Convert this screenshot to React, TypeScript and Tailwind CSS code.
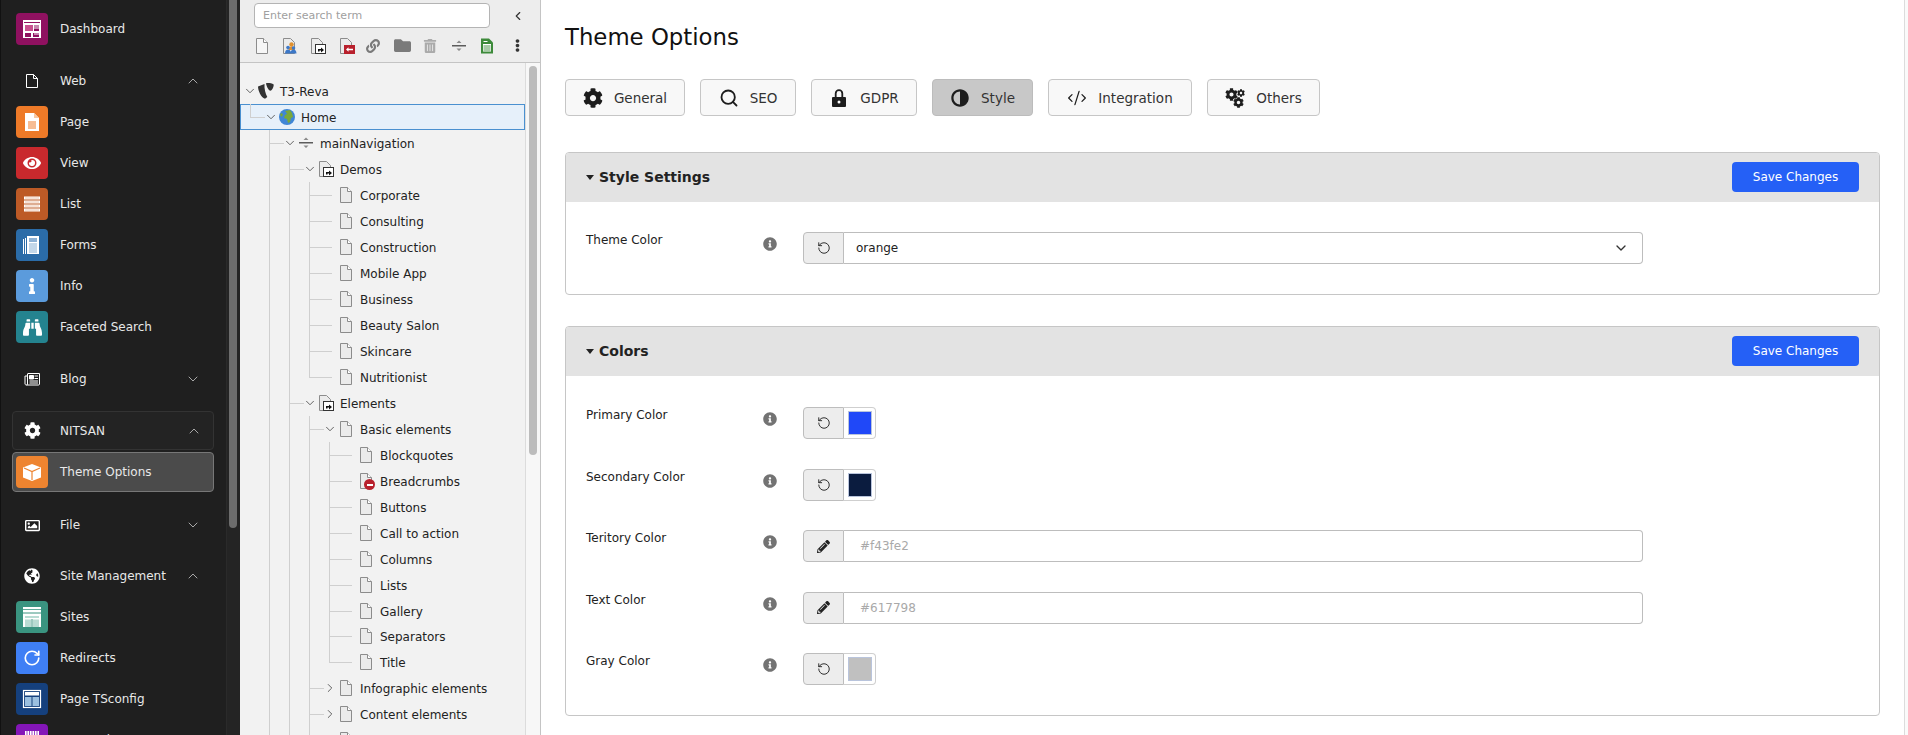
import type { ReactNode } from 'react';
import { ChevronDown, ChevronRight, ChevronUp, ChevronLeft, CodeXml, RotateCcw, RotateCw, Search } from 'lucide-react';
import {
  FaAdjust,
  FaBinoculars,
  FaCog,
  FaEllipsisV,
  FaEye,
  FaFolder,
  FaGlobeAmericas,
  FaInfo,
  FaInfoCircle,
  FaLink,
  FaPencilAlt,
  FaRegImage,
  FaTrashAlt,
} from 'react-icons/fa';

const PageGlyph = () => (
  <svg viewBox="0 0 32 32" className="size-8">
    <path d="M9 7h9l5 5v13H9z" fill="#fff" />
    <path d="M18 7v5h5z" fill="#f7c9a4" />
    <path d="M12 16h8M12 18h8M12 20h8M12 22h8" stroke="#ee7a28" strokeWidth="1" />
  </svg>
);

const DashboardGlyph = () => (
  <svg viewBox="0 0 32 32" className="size-8">
    <rect x="7" y="7" width="18" height="18" fill="#fff" />
    <rect x="8" y="9" width="16" height="1" fill="#8f1160" />
    <path d="M9 12h8v6H9z" fill="#c9518f" />
    <path d="M18 12h5v6h-5zM9 20h6v4H9zM17 20h6v4h-6z" fill="#8f1160" />
    <path d="M18 13h5M18 15h5M18 21h5" stroke="#fff" strokeWidth="1" />
  </svg>
);

const ListGlyph = () => (
  <svg viewBox="0 0 32 32" className="size-8">
    <g fill="#fff">
      <rect x="8" y="8.500" width="16" height="3" />
      <rect x="8" y="12.500" width="16" height="3" />
      <rect x="8" y="16.500" width="16" height="3" />
      <rect x="8" y="20.500" width="16" height="3" />
    </g>
    <path d="M9 10h14M9 14h14M9 18h14M9 22h14" stroke="#e8b89c" strokeWidth="0.800" />
  </svg>
);

const FormsGlyph = () => (
  <svg viewBox="0 0 32 32" className="size-8">
    <path d="M7 10h1v15H7zM9 9h1v16H9z" fill="#fff" />
    <rect x="11" y="7" width="12" height="18" fill="#fff" />
    <rect x="13" y="9" width="8" height="4" fill="#8fb3d6" />
    <path d="M13 15h8M13 17h8M13 19h8M13 21h8M13 23h8" stroke="#6b9cc8" strokeWidth="0.800" />
  </svg>
);

const CubeGlyph = () => (
  <svg viewBox="0 0 32 32" className="size-8">
    <path d="M16 8l9 3.500v10L16 25l-9-3.500v-10z" fill="#fff" />
    <path d="M8 12l8 3.500 8-3.500M16 15.500V24" stroke="#ee8430" strokeWidth="1.200" fill="none" />
  </svg>
);

const SitesGlyph = () => (
  <svg viewBox="0 0 32 32" className="size-8">
    <rect x="7" y="6" width="18" height="20" fill="#fff" />
    <path d="M7 8.500h18" stroke="#3a9480" strokeWidth="0.800" />
    <path d="M7 12h18" stroke="#3a9480" strokeWidth="1" />
    <path d="M9 15h14v2H9zM9 18.500h6V26H9zM17 18.500h6V26h-6z" fill="#b9dcd3" />
    <path d="M16 18v8" stroke="#3a9480" strokeWidth="1" />
  </svg>
);

const TsConfigGlyph = () => (
  <svg viewBox="0 0 32 32" className="size-8">
    <rect x="7.500" y="7.500" width="17" height="17" fill="none" stroke="#fff" strokeWidth="1.200" />
    <rect x="9" y="9" width="14" height="3.500" fill="#fff" />
    <rect x="9" y="14" width="6.500" height="9" fill="#9cc0e0" />
    <rect x="16.500" y="14" width="6.500" height="9" fill="#9cc0e0" />
  </svg>
);

const TypoScriptGlyph = () => (
  <svg viewBox="0 0 32 32" className="size-8">
    <rect x="9" y="7" width="14" height="18" fill="#fff" />
    <path d="M11 7v18M13.500 7v18M16 7v18M18.500 7v18M21 7v18" stroke="#8416b8" strokeWidth="0.800" />
  </svg>
);

const BlogGlyph = () => (
  <svg viewBox="0 0 16 16" className="size-4 fill-none stroke-white">
    <path d="M3.500 3v10c0 .8-.5 1-1 1s-1.500-.3-1.500-1V5h2.500" />
    <path d="M3.500 2.500h12v10.500c0 .6-.4 1-1 1h-12" />
    <path d="M5.500 4.500h4v3.500h-4z" fill="#fff" />
    <path d="M10.500 5h3.500M10.500 7.500h3.500M5.500 10h8.500M5.500 12h8.500" />
  </svg>
);

function NavTile({ bg, children }: { bg: string; children: ReactNode }) {
  return <span className={`flex size-8 shrink-0 items-center justify-center rounded-sm text-white ${bg}`}>{children}</span>;
}

function NavItem({ tile, label }: { tile: ReactNode; label: string }) {
  return (
    <div className="flex h-[41px] items-start pl-[15px] pt-1">
      {tile}
      <span className="ml-3 text-[12px] leading-8 text-[#e8e8e8]">{label}</span>
    </div>
  );
}

function NavGroup({ icon, label, open }: { icon: ReactNode; label: string; open?: boolean }) {
  return (
    <div className="flex h-[41px] items-center pb-px pl-[15px] pr-[25px]">
      <span className="flex size-8 shrink-0 items-center justify-center text-white">{icon}</span>
      <span className="ml-3 text-[12px] text-[#e8e8e8]">{label}</span>
      <span className="ml-auto text-[#a8a8a8]">{open ? <ChevronUp size={16} strokeWidth={1.5} /> : <ChevronDown size={16} strokeWidth={1.5} />}</span>
    </div>
  );
}

function Sidebar() {
  return (
    <aside className="flex h-full w-[240px] shrink-0 bg-[#1f1f1f]">
      <nav className="h-full w-[226px] overflow-hidden border-l border-[#111] pt-[9px]">
        <NavItem label="Dashboard" tile={<NavTile bg="bg-[#8f1160]"><DashboardGlyph /></NavTile>} />
        <div className="mt-[11px]">
          <NavGroup
            open
            label="Web"
            icon={
              <svg viewBox="0 0 16 16" className="size-4 fill-none stroke-white">
                <path d="M2.500 1.500h7l4 4v9h-11z" />
                <path d="M9.500 1.500v4h4" />
              </svg>
            }
          />
        </div>
        <NavItem label="Page" tile={<NavTile bg="bg-[#ee7a28]"><PageGlyph /></NavTile>} />
        <NavItem label="View" tile={<NavTile bg="bg-[#c9292d]"><FaEye size={18} /></NavTile>} />
        <NavItem label="List" tile={<NavTile bg="bg-[#bd5a26]"><ListGlyph /></NavTile>} />
        <NavItem label="Forms" tile={<NavTile bg="bg-[#2b6ca8]"><FormsGlyph /></NavTile>} />
        <NavItem label="Info" tile={<NavTile bg="bg-[#5b9bdc]"><FaInfo size={16} /></NavTile>} />
        <NavItem label="Faceted Search" tile={<NavTile bg="bg-[#24838f]"><FaBinoculars size={19} /></NavTile>} />
        <div className="mt-[11px]">
          <NavGroup label="Blog" icon={<BlogGlyph />} />
        </div>
        <div className="ml-[11px] mr-3 mt-[11px] flex h-[39px] items-center rounded-sm border border-[#333] bg-[#232323] pl-[3px] pr-[11px]">
          <span className="flex size-8 items-center justify-center text-white"><FaCog size={17} /></span>
          <span className="ml-3 text-[12px] text-[#e8e8e8]">NITSAN</span>
          <span className="ml-auto text-[#a8a8a8]"><ChevronUp size={16} strokeWidth={1.5} /></span>
        </div>
        <div className="ml-[11px] mr-3 mt-[2px] flex h-[40px] items-center rounded-sm border border-[#777] bg-[#4b4b4b] pl-[3px]">
          <NavTile bg="bg-[#ee8430]"><CubeGlyph /></NavTile>
          <span className="ml-3 text-[12px] text-[#e8e8e8]">Theme Options</span>
        </div>
        <div className="mt-[13px]">
          <NavGroup label="File" icon={<FaRegImage size={15} />} />
        </div>
        <div className="mt-[10px]">
          <NavGroup open label="Site Management" icon={<FaGlobeAmericas size={16} />} />
        </div>
        <NavItem label="Sites" tile={<NavTile bg="bg-[#3a9480]"><SitesGlyph /></NavTile>} />
        <NavItem label="Redirects" tile={<NavTile bg="bg-[#3f7ff5]"><RotateCw size={18} strokeWidth={2.2} /></NavTile>} />
        <NavItem label="Page TSconfig" tile={<NavTile bg="bg-[#15407d]"><TsConfigGlyph /></NavTile>} />
        <NavItem label="TypoScript" tile={<NavTile bg="bg-[#8416b8]"><TypoScriptGlyph /></NavTile>} />
      </nav>
      <div className="h-full w-[14px] border-l border-[#2a2a2a] bg-[#242424] pl-[2px]">
        <div className="h-[528px] w-2 rounded-b-full bg-[#6c6c6c]" />
      </div>
    </aside>
  );
}

const DocIcon = () => (
  <svg viewBox="0 0 16 16" className="size-4">
    <path d="M2.500 .5h7l4 4v11h-11z" fill="#ebebeb" stroke="#8c8c8c" />
    <path d="M9.500 .5v4h4" fill="#fff" stroke="#8c8c8c" />
  </svg>
);

const DocBlankIcon = () => (
  <svg viewBox="0 0 16 16" className="size-4">
    <path d="M2.500 .5h7l4 4v11h-11z" fill="#f6f6f6" stroke="#8c8c8c" />
    <path d="M9.500 .5v4h4" fill="#fff" stroke="#8c8c8c" />
  </svg>
);

const ShortcutIcon = () => (
  <svg viewBox="0 0 16 16" className="size-4">
    <path d="M1.500 .5h7l4 4v11h-11z" fill="#ebebeb" stroke="#8c8c8c" />
    <rect x="5.500" y="6.500" width="10" height="9" fill="#fff" stroke="#333" />
    <path d="M8 13.500v-2.500h3V9.500l3 2.500-3 2.500V12.500H9.500v1z" fill="#111" />
  </svg>
);

const RedShortcutIcon = () => (
  <svg viewBox="0 0 16 16" className="size-4">
    <path d="M1.500 .5h7l4 4v11h-11z" fill="#ebebeb" stroke="#8c8c8c" />
    <rect x="5" y="7" width="11" height="9" fill="#b8202c" />
    <path d="M14 10.800H9.500v-1.500L7 11.500l2.500 2.200v-1.500H14z" fill="#fff" />
  </svg>
);

const UserPageIcon = () => (
  <svg viewBox="0 0 16 16" className="size-4">
    <path d="M1.500 .5h7l4 4v11h-11z" fill="#ebebeb" stroke="#8c8c8c" />
    <circle cx="9.500" cy="6.500" r="2.200" fill="#e0912f" />
    <path d="M6.500 12c0-2.500 1.500-3.500 3-3.500s3 1 3 3.500z" fill="#e0912f" />
    <circle cx="6" cy="9.500" r="1.800" fill="#3c78c8" />
    <circle cx="11.500" cy="10" r="1.800" fill="#3c78c8" />
    <path d="M3 15.500c0-2.500 1.300-4 3-4s3 1.500 3 4zM8.500 15.500c0-2.500 1.300-4 3-4s3 1.500 3 4z" fill="#3c78c8" />
  </svg>
);

const SeparatorIcon = () => (
  <svg viewBox="0 0 16 16" className="size-4 fill-[#5c5c5c]">
    <rect x="1" y="7" width="14" height="1.500" />
    <path d="M5.500 5L8 2.500 10.500 5zM5.500 10.500h5L8 13z" fill="#8a8a8a" />
  </svg>
);

const GreenDocIcon = () => (
  <svg viewBox="0 0 16 16" className="size-4">
    <path d="M2 .5h8l4 4v11H2z" fill="#3d8a3a" />
    <rect x="4" y="6" width="8" height="7.500" fill="#fff" />
    <path d="M4.500 8h7M4.500 10h7M4.500 12h7" stroke="#3d8a3a" strokeWidth="0.900" />
    <path d="M4.500 3.500h4" stroke="#fff" />
  </svg>
);

const Typo3Logo = () => (
  <svg viewBox="0 0 16 16" className="size-4 fill-[#333]">
    <path d="M0 3.500L6.500 1c-.4 4.500 1 9.500 2.800 13l-2.300 1.800C3 14.500 0 7.500 0 3.500z" />
    <path d="M8 .200c2.500-.4 5.500 0 7.700 1.200.2 2-1.500 6-3.300 6.300C10.500 7.500 8.300 3 8 .200z" />
  </svg>
);

const HomeGlobe = () => (
  <svg viewBox="0 0 16 16" className="size-4">
    <circle cx="8" cy="8" r="8" fill="#3f86d6" />
    <path d="M6 2l5-1 2 3 1 4-2 1-1 4-2 1-1-4-3-1 1-3 2-1-1-2z" fill="#79a83a" />
    <path d="M1 5l2-1 1 2-2 2z" fill="#79a83a" />
  </svg>
);

const LockIcon = () => (
  <svg viewBox="0 0 16 20" className="h-5 w-4">
    <path d="M4.700 9V5.500a3.300 3.300 0 0 1 6.600 0V9" fill="none" stroke="#1d1d1d" strokeWidth="1.800" />
    <path d="M2 9h12a1 1 0 0 1 1 1v8a1 1 0 0 1-1 1H2a1 1 0 0 1-1-1v-8a1 1 0 0 1 1-1z" fill="#1d1d1d" />
    <circle cx="8" cy="14" r="1.500" fill="#fff" />
  </svg>
);

const GearsIcon = () => (
  <span className="relative block h-5 w-5">
    <FaCog size={13} className="absolute left-0 top-0" />
    <FaCog size={8} className="absolute right-0 top-[1px]" />
    <FaCog size={11} className="absolute bottom-0 right-[1px]" />
  </span>
);

const BlockedDoc = () => (
  <span className="relative flex size-4 items-center justify-center">
    <DocIcon />
    <span className="absolute -bottom-[1px] -right-[1px] flex size-[11px] items-center justify-center rounded-full bg-[#b8202c]">
      <span className="h-[2px] w-[6px] bg-white" />
    </span>
  </span>
);

type TreeRow = {
  label: string;
  level: number;
  icon: ReactNode;
  toggle?: 'open' | 'closed';
  guides: number[];
  end?: boolean;
  active?: boolean;
};

const rows: TreeRow[] = [
  { label: 'T3-Reva', level: 0, icon: <Typo3Logo />, toggle: 'open', guides: [] },
  { label: 'Home', level: 1, icon: <HomeGlobe />, toggle: 'open', guides: [], end: true, active: true },
  { label: 'mainNavigation', level: 2, icon: <SeparatorIcon />, toggle: 'open', guides: [1] },
  { label: 'Demos', level: 3, icon: <ShortcutIcon />, toggle: 'open', guides: [1, 2] },
  ...['Corporate', 'Consulting', 'Construction', 'Mobile App', 'Business', 'Beauty Salon', 'Skincare'].map((label) => ({
    label,
    level: 4,
    icon: <DocIcon />,
    guides: [1, 2, 3],
  })),
  { label: 'Nutritionist', level: 4, icon: <DocIcon />, guides: [1, 2], end: true },
  { label: 'Elements', level: 3, icon: <ShortcutIcon />, toggle: 'open', guides: [1, 2] },
  { label: 'Basic elements', level: 4, icon: <DocIcon />, toggle: 'open', guides: [1, 2, 3] },
  { label: 'Blockquotes', level: 5, icon: <DocIcon />, guides: [1, 2, 3, 4] },
  { label: 'Breadcrumbs', level: 5, icon: <BlockedDoc />, guides: [1, 2, 3, 4] },
  ...['Buttons', 'Call to action', 'Columns', 'Lists', 'Gallery', 'Separators'].map((label) => ({
    label,
    level: 5,
    icon: <DocIcon />,
    guides: [1, 2, 3, 4],
  })),
  { label: 'Title', level: 5, icon: <DocIcon />, guides: [1, 2, 3], end: true },
  { label: 'Infographic elements', level: 4, icon: <DocIcon />, toggle: 'closed', guides: [1, 2, 3] },
  { label: 'Content elements', level: 4, icon: <DocIcon />, toggle: 'closed', guides: [1, 2, 3] },
  { label: 'Forms', level: 4, icon: <DocIcon />, guides: [1, 2, 3] },
];

function Row({ row }: { row: TreeRow }) {
  const base = 10 + row.level * 20;
  return (
    <div
      className={`relative flex items-center border-y ${row.label === 'Gallery' ? 'h-[25px]' : 'h-[26px]'} ${
        row.active ? 'border-x border-[#4a90d0] bg-[#e6f0fa]' : 'border-transparent'
      }`}
      style={{ paddingLeft: base + 8 }}
    >
      {row.guides.map((g) => (
        <span key={g} className="absolute -bottom-px -top-px w-px bg-[#cfcfcf]" style={{ left: 9 + g * 20 }} />
      ))}
      {row.level > 0 && (
        <>
          {row.end && <span className="absolute -top-px h-[14px] w-px bg-[#cfcfcf]" style={{ left: base - 21 }} />}
          <span className="absolute top-1/2 h-px bg-[#cfcfcf]" style={{ left: base - 21, width: row.toggle ? 15 : 23 }} />
        </>
      )}
      {row.toggle && (
        <span className="absolute top-1/2 -translate-y-1/2 text-[#444]" style={{ left: base - 7 }}>
          {row.toggle === 'open' ? <ChevronDown size={14} strokeWidth={1.4} /> : <ChevronRight size={14} strokeWidth={1.4} />}
        </span>
      )}
      <span className="relative flex size-4 shrink-0 items-center justify-center">{row.icon}</span>
      <span className="ml-[6px] mt-[2px] whitespace-nowrap text-[12px] text-[#222]">{row.label}</span>
    </div>
  );
}

function PageTree() {
  return (
    <section className="flex h-full w-[301px] shrink-0 flex-col border-r border-[#c4c4c4] bg-[#f2f2f2]">
      <div className="h-[63px] shrink-0 border-b border-[#c4c4c4] bg-[#ededed] pl-[14px] pt-[3px]">
        <div className="flex items-center">
          <input
            placeholder="Enter search term"
            className="h-[25px] w-[236px] rounded-sm border border-[#b4b4b4] bg-white px-2 text-[11px] text-[#333] outline-none placeholder:text-[#a0a0a0]"
          />
          <ChevronLeft size={14} strokeWidth={2} className="ml-[21px] text-[#333]" />
        </div>
        <div className="mt-[9px] flex items-center text-[#7a7a7a]">
          <span className="flex w-[28px]"><DocBlankIcon /></span>
          <span className="flex w-[28px]"><UserPageIcon /></span>
          <span className="flex w-[29px]"><ShortcutIcon /></span>
          <span className="flex w-[27px]"><RedShortcutIcon /></span>
          <span className="flex w-[28px]"><FaLink size={14} /></span>
          <span className="flex w-[29px]"><FaFolder size={17} /></span>
          <span className="flex w-[28px] text-[#aaa]"><FaTrashAlt size={14} /></span>
          <span className="flex w-[28px]"><SeparatorIcon /></span>
          <span className="flex w-[32px]"><GreenDocIcon /></span>
          <span className="flex text-[#333]"><FaEllipsisV size={13} /></span>
        </div>
      </div>
      <div className="flex min-h-0 flex-1">
        <div className="w-[285px] shrink-0 overflow-hidden pt-[15px]">
          {rows.map((row) => (
            <Row key={row.label} row={row} />
          ))}
        </div>
        <div className="flex-1 border-l border-[#dcdcdc] bg-[#f7f7f7] pl-[3px] pt-[3px]">
          <div className="h-[389px] w-2 rounded-full bg-[#bcbcbc]" />
        </div>
      </div>
    </section>
  );
}

function Tab({ icon, label, width, active }: { icon: ReactNode; label: string; width: string; active?: boolean }) {
  return (
    <button
      className={`flex h-[37px] items-center justify-center gap-[11px] rounded-sm border text-[13.5px] text-[#333] ${width} ${
        active ? 'border-[#bcbcbc] bg-[#c8c8c8]' : 'border-[#c6c6c6] bg-[#f8f8f8]'
      }`}
    >
      <span className="flex w-5 justify-center text-[#1d1d1d]">{icon}</span>
      <span className="mt-[2px]">{label}</span>
    </button>
  );
}

function PanelHead({ title }: { title: string }) {
  return (
    <div className="flex h-[49px] items-start justify-between bg-[#e3e3e3] px-[20px] pt-[9px]">
      <div className="flex h-[30px] items-center text-[#222]">
        <span className="mr-[5px] h-0 w-0 border-x-[4px] border-t-[5px] border-x-transparent border-t-[#222]" />
        <span className="text-[14px] font-bold">{title}</span>
      </div>
      <button className="h-[30px] w-[127px] rounded-sm bg-[#2560f6] text-[12px] text-white">Save Changes</button>
    </div>
  );
}

function Field({ label, children, className }: { label: string; children: ReactNode; className?: string }) {
  return (
    <div className={`flex items-start pl-[20px] ${className ?? ''}`}>
      <div className="w-[177px] shrink-0 text-[12px] leading-[17px] text-[#222]">{label}</div>
      <FaInfoCircle size={14} className="mt-[5px] shrink-0 text-[#737373]" />
      <div className="ml-[26px]">{children}</div>
    </div>
  );
}

const addonClass = 'flex h-[32px] w-[41px] shrink-0 items-center justify-center rounded-l-sm border border-[#bdbdbd] bg-[#ededed] text-[#222]';

function ColorField({ label, color }: { label: string; color: string }) {
  return (
    <Field label={label} className="h-[61.5px]">
      <div className="flex">
        <span className={addonClass}><RotateCcw size={14} strokeWidth={1.6} /></span>
        <span className="flex h-[32px] w-[32px] items-center justify-center rounded-r-sm border border-l-0 border-[#cfcfcf] bg-white">
          <span className={`h-[24px] w-[24px] border border-[#b9c4dc] ${color}`} />
        </span>
      </div>
    </Field>
  );
}

function HexField({ label, value }: { label: string; value: string }) {
  return (
    <Field label={label} className="h-[61.5px]">
      <div className="flex w-[840px]">
        <span className={addonClass}><FaPencilAlt size={13} /></span>
        <input
          placeholder={value}
          className="h-[32px] flex-1 rounded-r-sm border border-l-0 border-[#bdbdbd] bg-white pl-4 text-[12px] outline-none placeholder:text-[#a9a9a9]"
        />
      </div>
    </Field>
  );
}

function Content() {
  return (
    <main className="h-full min-w-0 flex-1 overflow-hidden px-[24px] pt-[21px]">
      <h1 className="text-[22.8px] leading-8 text-[#111]">Theme Options</h1>
      <div className="mt-[26px] flex gap-[15px]">
        <Tab label="General" width="w-[120px]" icon={<FaCog size={20} />} />
        <Tab label="SEO" width="w-[96px]" icon={<Search size={20} strokeWidth={2.2} />} />
        <Tab label="GDPR" width="w-[106px]" icon={<LockIcon />} />
        <Tab label="Style" width="w-[101px]" active icon={<FaAdjust size={18} className="-scale-x-100" />} />
        <Tab label="Integration" width="w-[144px]" icon={<CodeXml size={20} strokeWidth={1.5} />} />
        <Tab label="Others" width="w-[113px]" icon={<GearsIcon />} />
      </div>

      <section className="mt-[36px] overflow-hidden rounded-sm border border-[#c6c6c6]">
        <PanelHead title="Style Settings" />
        <div className="pb-[30px] pt-[30px]">
          <Field label="Theme Color">
            <div className="flex w-[840px]">
              <span className={addonClass}><RotateCcw size={14} strokeWidth={1.6} /></span>
              <div className="flex h-[32px] flex-1 items-center justify-between rounded-r-sm border border-l-0 border-[#bdbdbd] bg-white pl-3 pr-[13px] text-[12px] text-[#222]">
                orange
                <ChevronDown size={16} strokeWidth={2} className="text-[#333]" />
              </div>
            </div>
          </Field>
        </div>
      </section>

      <section className="mt-[31px] overflow-hidden rounded-sm border border-[#c6c6c6]">
        <PanelHead title="Colors" />
        <div className="pt-[31px]">
          <ColorField label="Primary Color" color="bg-[#2048f8]" />
          <ColorField label="Secondary Color" color="bg-[#0b1c3f]" />
          <HexField label="Teritory Color" value="#f43fe2" />
          <HexField label="Text Color" value="#617798" />
          <ColorField label="Gray Color" color="bg-[#c0c0c0]" />
        </div>
      </section>
    </main>
  );
}

export default function App() {
  return (
    <div className="flex h-screen overflow-hidden bg-white font-['DejaVu_Sans',sans-serif]">
      <Sidebar />
      <PageTree />
      <Content />
      <div className="h-full w-1 shrink-0 border-l border-[#dcdcdc] bg-[#fafafa]" />
    </div>
  );
}
